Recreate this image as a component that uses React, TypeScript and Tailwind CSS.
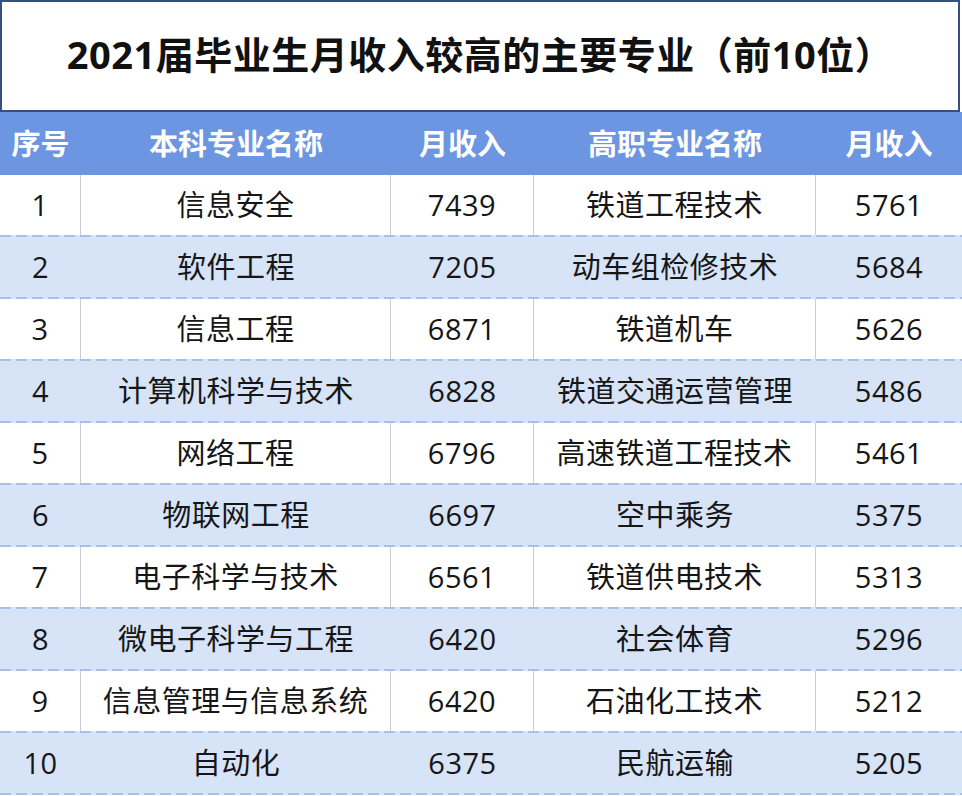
const rows: [string, string, string, string, string][] = [
  ["1", "信息安全", "7439", "铁道工程技术", "5761"],
  ["2", "软件工程", "7205", "动车组检修技术", "5684"],
  ["3", "信息工程", "6871", "铁道机车", "5626"],
  ["4", "计算机科学与技术", "6828", "铁道交通运营管理", "5486"],
  ["5", "网络工程", "6796", "高速铁道工程技术", "5461"],
  ["6", "物联网工程", "6697", "空中乘务", "5375"],
  ["7", "电子科学与技术", "6561", "铁道供电技术", "5313"],
  ["8", "微电子科学与工程", "6420", "社会体育", "5296"],
  ["9", "信息管理与信息系统", "6420", "石油化工技术", "5212"],
  ["10", "自动化", "6375", "民航运输", "5205"],
];

const headers = ["序号", "本科专业名称", "月收入", "高职专业名称", "月收入"];

const cols = "grid grid-cols-[81px_310px_143px_282px_146px]";

export default function App() {
  return (
    <div className="w-[962px] h-[796px] overflow-hidden bg-white font-['Open_Sans','Noto_Sans_CJK_SC',sans-serif]">
      {/* 标题 */}
      <div className="mr-[2px] flex h-[112px] items-center justify-center border-2 border-[#34507f] bg-white">
        <h1 className="mt-[-4px] text-[38px] font-bold tracking-[0.5px] text-[#111]">
          2021届毕业生月收入较高的主要专业（前10位）
        </h1>
      </div>

      {/* 表头 */}
      <div className={`${cols} h-[63px] bg-[#6c96e2]`}>
        {headers.map((h, i) => (
          <div
            key={i}
            className="flex items-center justify-center text-[29px] font-bold text-white"
          >
            {h}
          </div>
        ))}
      </div>

      {/* 表体 */}
      {rows.map((r, idx) => {
        const striped = idx % 2 === 1;
        return (
          <div key={r[0]}>
            <div
              className={`${cols} h-[60px] text-[29px] text-[#161616] ${
                striped ? "bg-[#d7e3f6]" : "bg-white"
              }`}
            >
              {r.map((cell, i) => (
                <div
                  key={i}
                  className={`flex items-center justify-center tracking-[0.5px] ${
                    !striped && i < 4 ? "border-r border-[#c9ccd2]" : ""
                  }`}
                >
                  {cell}
                </div>
              ))}
            </div>
            <div className="h-[2px] bg-[#d7e3f6] bg-[repeating-linear-gradient(90deg,#a6c1ea_0_11px,transparent_11px_16px)]" />
          </div>
        );
      })}
    </div>
  );
}
